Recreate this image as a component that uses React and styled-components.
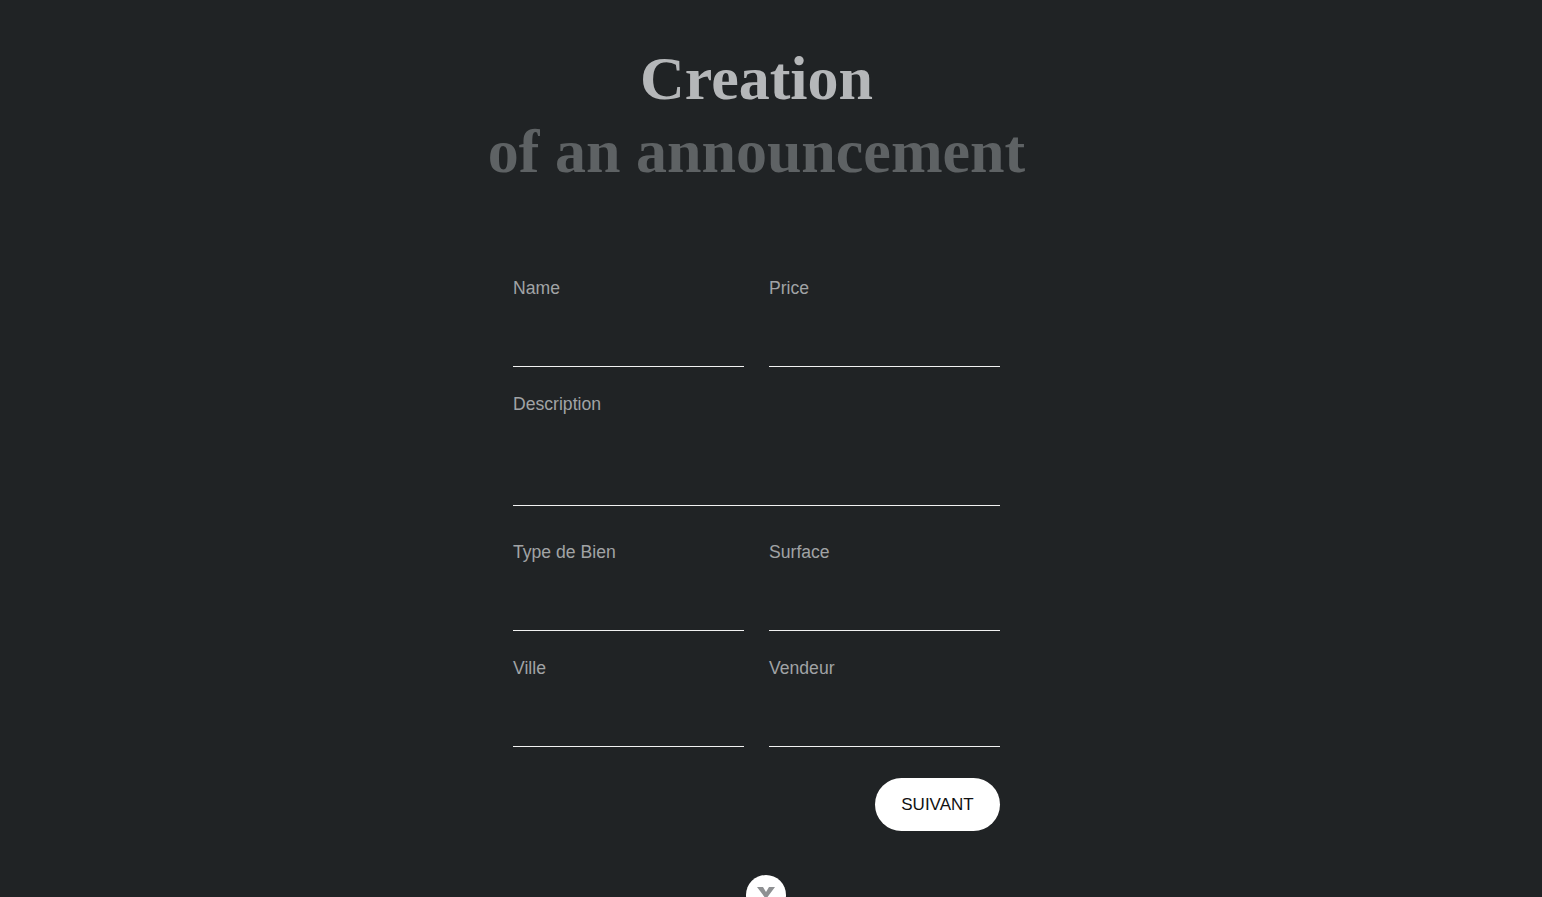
import React from 'react';
import styled, { createGlobalStyle } from 'styled-components';

const GlobalStyle = createGlobalStyle`
  html, body {
    margin: 0;
    padding: 0;
    background-color: #202325;
    overflow: hidden;
  }
`;

const Page = styled.main`
  position: relative;
  height: 897px;
  padding-right: 29px;
  display: flex;
  flex-direction: column;
  align-items: center;
  font-family: "Liberation Sans", Arial, sans-serif;
`;

const Title = styled.h1`
  margin: 42px 0 0;
  text-align: center;
  font-family: "Liberation Serif", "Times New Roman", serif;
  font-weight: bold;
  font-size: 62px;
  line-height: 73px;
  color: #b5b7b9;
`;

const SubTitle = styled.span`
  display: block;
  color: #5e6264;
`;

const Form = styled.form`
  width: 487px;
  margin-top: 89px;
  display: flex;
  flex-direction: column;
`;

const Row = styled.div`
  display: grid;
  grid-template-columns: ${(p) => (p.single ? '1fr' : '1fr 1fr')};
  column-gap: 25px;
  margin-bottom: ${(p) => p.gap || 26}px;
`;

const Field = styled.label`
  display: flex;
  flex-direction: column;
`;

const Label = styled.span`
  font-size: 17.6px;
  line-height: 22px;
  color: #a1a3a5;
`;

const Input = styled.input`
  height: ${(p) => p.tall || 67}px;
  border: none;
  border-bottom: 1px solid #f2f2f2;
  background: transparent;
  color: #e0e0e0;
  font-size: 17px;
  outline: 0;
  padding: 0;
`;

const Actions = styled.div`
  display: flex;
  justify-content: flex-end;
`;

const NextButton = styled.button`
  width: 125px;
  height: 53px;
  border: none;
  border-radius: 27px;
  background-color: #ffffff;
  color: #111111;
  font-family: "Liberation Sans", Arial, sans-serif;
  font-size: 17px;
  cursor: pointer;
`;

const ScrollDown = styled.div`
  position: absolute;
  left: 746px;
  top: 875px;
  width: 40px;
  height: 40px;
  border-radius: 50%;
  background-color: #ffffff;
  display: flex;
  justify-content: center;
  padding-top: 12px;
  box-sizing: border-box;
`;

function App() {
  return (
    <>
      <GlobalStyle />
      <Page>
        <Title>
          Creation
          <SubTitle>of an announcement</SubTitle>
        </Title>
        <Form onSubmit={(e) => e.preventDefault()}>
          <Row>
            <Field>
              <Label>Name</Label>
              <Input type="text" name="name" />
            </Field>
            <Field>
              <Label>Price</Label>
              <Input type="text" name="price" />
            </Field>
          </Row>
          <Row single gap={35}>
            <Field>
              <Label>Description</Label>
              <Input type="text" name="description" tall={90} />
            </Field>
          </Row>
          <Row>
            <Field>
              <Label>Type de Bien</Label>
              <Input type="text" name="type" />
            </Field>
            <Field>
              <Label>Surface</Label>
              <Input type="text" name="surface" />
            </Field>
          </Row>
          <Row gap={31}>
            <Field>
              <Label>Ville</Label>
              <Input type="text" name="ville" />
            </Field>
            <Field>
              <Label>Vendeur</Label>
              <Input type="text" name="vendeur" />
            </Field>
          </Row>
          <Actions>
            <NextButton type="submit">SUIVANT</NextButton>
          </Actions>
        </Form>
        <ScrollDown>
          <svg width="18" height="12" viewBox="0 0 18 12">
            <path d="M0 0 H6 L9 5 L12 0 H18 L9 12 Z" fill="#8e9092" />
          </svg>
        </ScrollDown>
      </Page>
    </>
  );
}

export default App;
